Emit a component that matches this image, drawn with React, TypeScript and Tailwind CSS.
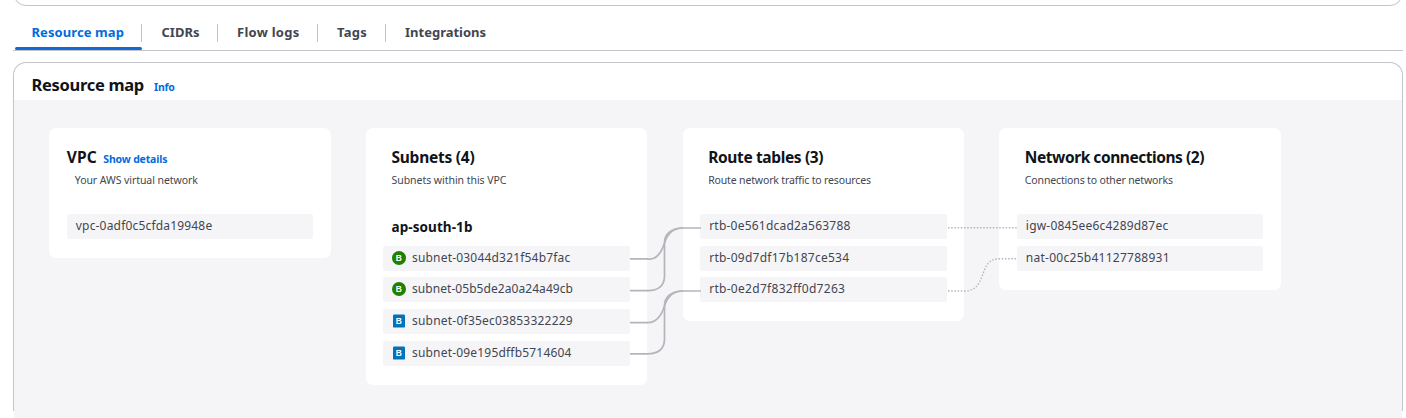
import type { ReactNode } from "react";

type Item = { id: string; tracking: string; badge?: "public" | "private"; gap?: string };

const tabs = [
  { label: "CIDRs", className: "w-[76px] pl-[19.5px] tracking-[0.02px]" },
  { label: "Flow logs", className: "w-[100px] pl-[19px] tracking-[0.26px]" },
  { label: "Tags", className: "w-[68px] pl-[19px] tracking-[0.25px]" },
];

const subnets: Item[] = [
  { id: "subnet-03044d321f54b7fac", tracking: "tracking-[0.19px]", badge: "public", gap: "mb-[6px]" },
  { id: "subnet-05b5de2a0a24a49cb", tracking: "tracking-[0.06px]", badge: "public", gap: "mb-[7px]" },
  { id: "subnet-0f35ec03853322229", tracking: "tracking-[0.22px]", badge: "private", gap: "mb-[7px]" },
  { id: "subnet-09e195dffb5714604", tracking: "tracking-[0.19px]", badge: "private" },
];

const routeTables: Item[] = [
  { id: "rtb-0e561dcad2a563788", tracking: "tracking-[0.22px]", gap: "mb-[7px]" },
  { id: "rtb-09d7df17b187ce534", tracking: "tracking-[0.25px]", gap: "mb-[6px]" },
  { id: "rtb-0e2d7f832ff0d7263", tracking: "tracking-[0.29px]" },
];

const connections: Item[] = [
  { id: "igw-0845ee6c4289d87ec", tracking: "tracking-[0.19px]", gap: "mb-[7px]" },
  { id: "nat-00c25b41127788931", tracking: "tracking-[0.26px]" },
];

function Badge({ kind }: { kind: "public" | "private" }) {
  return (
    <svg viewBox="0 0 14 14" className="mr-[5.5px] size-[14px] shrink-0">
      {kind === "public" ? (
        <circle cx="7" cy="7" r="7" fill="#218000" />
      ) : (
        <rect x="1" y="0.6" width="12" height="13" rx="1.2" fill="#0073bb" />
      )}
      <text x="6.7" y="9.9" textAnchor="middle" fontSize="8.5" fontWeight="700" fill="#fff" fontFamily="Liberation Sans, sans-serif">
        B
      </text>
    </svg>
  );
}

function Row({ item }: { item: Item }) {
  return (
    <div className={`flex h-[25px] items-center rounded-[2px] bg-[#f5f5f8] pb-px pl-[9px] ${item.gap ?? ""}`}>
      {item.badge && <Badge kind={item.badge} />}
      <span className={`text-[12px] leading-[18px] whitespace-nowrap text-[#424650] ${item.tracking}`}>{item.id}</span>
    </div>
  );
}

function Card({
  className,
  title,
  subtitle,
  inset,
  children,
}: {
  className: string;
  title: ReactNode;
  subtitle: ReactNode;
  inset: string;
  children: ReactNode;
}) {
  return (
    <section className={`shrink-0 rounded-[7px] bg-white px-[17.5px] pt-[19px] ${className}`}>
      <div className={`h-[20px] text-[15.5px] leading-[20px] font-bold whitespace-nowrap text-[#0f141a] ${inset}`}>{title}</div>
      <div className="mt-[5px] mb-[26px] h-4 pl-2 text-[10.5px] leading-4 whitespace-nowrap text-[#424650]">{subtitle}</div>
      {children}
    </section>
  );
}

function Connectors() {
  return (
    <svg className="pointer-events-none absolute top-0 left-0" width="1388" height="318" viewBox="14 100 1388 318" fill="none">
      <g stroke="#b4b4bb" strokeWidth="1.7">
        <path d="M630 258.8H647C656 260.5 661 254 664.5 243C668 232 674 228 683 228H701" />
        <path d="M630 290.6H647C658 291 664.5 286 664.5 276V243C664.5 234 671 228 683 228" />
        <path d="M630 322.6H647C656 323 661 317 664.5 306C668 295 674 291 683 291H701" />
        <path d="M630 353.8H647C658 354 664.5 349 664.5 339V306C664.5 297 671 291 683 291" />
      </g>
      <g stroke="#b4b4bb" strokeWidth="1.4" strokeDasharray="1.5 1.7">
        <path d="M948 227.8H1017" />
        <path d="M948 291H965C976 291 979.5 283 982.5 275S988 258.8 999 258.8H1017" />
      </g>
    </svg>
  );
}

export default function App() {
  return (
    <div className="h-[418px] overflow-hidden bg-white pr-[3px] pl-[13px] font-['Noto_Sans','Liberation_Sans',sans-serif]">
      <div className="h-[6px] overflow-hidden">
        <div className="-mt-[24px] h-[30px] rounded-b-[13px] border border-[#c3c3c8]" />
      </div>

      <nav className="flex h-[45px] border-b border-[#c3c3c8] pl-[2px] text-[13px] leading-[18px] font-bold text-[#424650]">
        <div className="relative w-[127px] pt-[17px] pl-[16.5px] tracking-[0.08px] whitespace-nowrap text-[#006ce0]">
          Resource map
          <span className="absolute bottom-0 left-0 h-[3px] w-full rounded-[2px] bg-[#116bd6]" />
          <span className="absolute top-[18px] right-0 h-[18px] w-px bg-[#c3c3c8]" />
        </div>
        {tabs.map((tab) => (
          <div key={tab.label} className={`relative pt-[17px] whitespace-nowrap ${tab.className}`}>
            {tab.label}
            <span className="absolute top-[18px] right-0 h-[18px] w-px bg-[#c3c3c8]" />
          </div>
        ))}
        <div className="pt-[17px] pl-[19px]">Integrations</div>
      </nav>

      <main className="mt-[11px] h-[349px] rounded-t-[13px] border border-b-0 border-[#c3c3c8] bg-white">
        <header className="flex h-[37px] items-baseline gap-[10px] pt-[11px] pl-[17.5px]">
          <h2 className="text-[16.5px] leading-[22px] font-bold tracking-[-0.3px] text-[#0f141a]">Resource map</h2>
          <a className="text-[10.5px] leading-4 font-bold tracking-[-0.2px] text-[#006ce0]">Info</a>
        </header>

        <div className="relative flex h-[333px] items-start gap-[35.2px] bg-[#f5f5f8] pt-7 pl-[35.3px]">
          <Card
            className="h-[130px] w-[281.5px]"
            inset=""
            title={
              <span className="flex items-baseline gap-[6.5px]">
                <span className="tracking-[0.1px]">VPC</span>
                <a className="text-[10.5px] leading-4 tracking-[-0.16px] text-[#006ce0]">Show details</a>
              </span>
            }
            subtitle={<span className="tracking-[-0.07px]">Your AWS virtual network</span>}
          >
            <Row item={{ id: "vpc-0adf0c5cfda19948e", tracking: "tracking-[0.18px]" }} />
          </Card>

          <Card
            className="h-[257px] w-[281.5px]"
            inset="pl-2 tracking-[-0.24px]"
            title="Subnets (4)"
            subtitle={<span className="tracking-[-0.04px]">Subnets within this VPC</span>}
          >
            <h3 className="mb-[7px] h-[25px] pl-2 text-[13.5px] leading-[26px] font-bold tracking-[0.08px] text-[#0f141a]">ap-south-1b</h3>
            {subnets.map((item) => (
              <Row key={item.id} item={item} />
            ))}
          </Card>

          <Card
            className="h-[193px] w-[281.5px]"
            inset="pl-2 tracking-[-0.36px]"
            title="Route tables (3)"
            subtitle={<span className="tracking-[-0.15px]">Route network traffic to resources</span>}
          >
            {routeTables.map((item) => (
              <Row key={item.id} item={item} />
            ))}
          </Card>

          <Card
            className="h-[162px] w-[281.5px]"
            inset="pl-2 tracking-[-0.45px]"
            title="Network connections (2)"
            subtitle={<span className="tracking-[-0.15px]">Connections to other networks</span>}
          >
            {connections.map((item) => (
              <Row key={item.id} item={item} />
            ))}
          </Card>

          <Connectors />
        </div>
      </main>
    </div>
  );
}
